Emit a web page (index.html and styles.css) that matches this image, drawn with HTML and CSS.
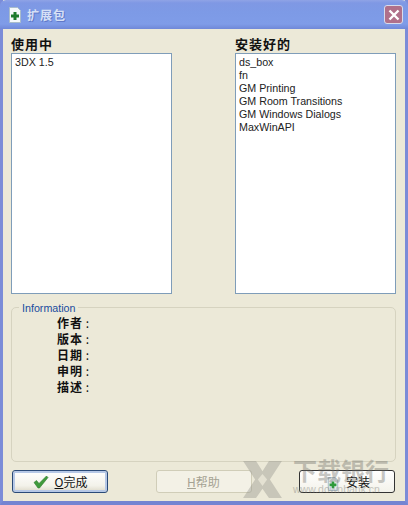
FILE: index.html
```html
<!DOCTYPE html>
<html lang="zh-CN">
<head>
    <meta charset="UTF-8">
    <meta name="viewport" content="width=device-width, initial-scale=1.0">
    <title>扩展包</title>
    <link rel="stylesheet" href="styles.css">
</head>
<body>
    <div class="window">
        <div class="titlebar">
            <svg class="title-icon" width="14" height="16" viewBox="0 0 14 16">
                <path d="M1.5 .5H9.500L12.500 3.500V15.500H1.500Z" fill="#f4f8fb" stroke="#a9bccb"/>
                <path d="M5.500 5H8.500V7.500H11V10.500H8.500V13H5.500V10.500H3V7.500H5.500Z" fill="#1c7a2e"/>
            </svg>
            <span class="title-text">扩展包</span>
            <div class="close-btn">
                <svg width="12" height="12" viewBox="0 0 12 12">
                    <path d="M1.500 1.500L10.500 10.500M10.500 1.500L1.500 10.500" stroke="#fff" stroke-width="2.400"/>
                </svg>
            </div>
        </div>

        <div class="content">
            <div class="lists">
                <div class="list-col">
                    <div class="list-label">使用中</div>
                    <div class="listbox">
                        <div>3DX 1.5</div>
                    </div>
                </div>
                <div class="list-col">
                    <div class="list-label">安装好的</div>
                    <div class="listbox">
                        <div>ds_box</div>
                        <div>fn</div>
                        <div>GM Printing</div>
                        <div>GM Room Transitions</div>
                        <div>GM Windows Dialogs</div>
                        <div>MaxWinAPI</div>
                    </div>
                </div>
            </div>

            <div class="groupbox">
                <div class="group-title">Information</div>
                <div class="info-row"><b>作者</b> :</div>
                <div class="info-row"><b>版本</b> :</div>
                <div class="info-row"><b>日期</b> :</div>
                <div class="info-row"><b>申明</b> :</div>
                <div class="info-row"><b>描述</b> :</div>
            </div>

            <div class="buttons">
                <div class="btn btn-default">
                    <svg width="16" height="14" viewBox="0 0 16 14">
                        <path d="M1 7.500L3.500 5.500L6 8.500L13.500 1L15 2.500L6.500 13H5Z" fill="#3f9a3c" stroke="#2b7a2c" stroke-width=".6"/>
                    </svg>
                    <span><u>O</u>完成</span>
                </div>
                <div class="btn btn-disabled"><span><u>H</u>帮助</span></div>
                <div class="btn btn-dark">
                    <svg class="install-icon" width="12" height="14" viewBox="0 0 14 16">
                        <path d="M1.500 .5H9.500L12.500 3.500V15.500H1.500Z" fill="#e6eef2" stroke="#9fb2c0"/>
                        <path d="M5.500 5H8.500V7.500H11V10.500H8.500V13H5.500V10.500H3V7.500H5.500Z" fill="#2f9a3a"/>
                    </svg>
                    <span>安装</span>
                </div>
            </div>
        </div>

        <!-- watermark over the bottom right corner -->
        <div class="watermark">
            <svg class="wm-logo" width="39" height="37" viewBox="0 0 42 40">
                <path d="M0 0H14L21 11L28 0H42L29 20L42 40H28L21 30L14 40H0L13 20Z" fill="#8f8f88"/>
                <path d="M21 14L26 20L21 27L16 20Z" fill="#d8d6ca"/>
            </svg>
            <div class="wm-text">
                <div class="wm-name">下载银行</div>
                <div class="wm-url">www.downbank.cn</div>
            </div>
        </div>
    </div>
</body>
</html>
```

FILE: styles.css
```css
html, body {
    margin: 0;
    padding: 0;
}
body {
    width: 408px;
    height: 505px;
    overflow: hidden;
    font-family: "Liberation Sans", "Noto Sans CJK SC", sans-serif;
    font-size: 12px;
    color: #111;
}
.window {
    position: relative;
    box-sizing: border-box;
    width: 408px;
    height: 505px;
    display: flex;
    flex-direction: column;
    background-color: #ece9d8;
    border-left: 3px solid #7b8cd8;
    border-right: 3px solid #7b8cd8;
    border-bottom: 4px solid #7484d2;
}
.titlebar {
    display: flex;
    align-items: center;
    height: 29px;
    margin: 0 -3px;
    padding: 0 5px 0 8px;
    box-sizing: border-box;
    border-radius: 6px 6px 0 0;
    background: linear-gradient(to bottom, #8fa3e6 0, #7f98e4 3px, #7d9ae6 12px, #7f9ce8 24px, #7088d8 29px);
}
.title-icon {
    margin-right: 5px;
}
.title-text {
    font-family: "Noto Sans CJK SC", sans-serif;
    font-size: 12px;
    font-weight: bold;
    letter-spacing: 1px;
    color: #d6e0f6;
    text-shadow: 1px 1px 0 #6078c8;
}
.close-btn {
    display: flex;
    align-items: center;
    justify-content: center;
    width: 19px;
    height: 19px;
    margin-left: auto;
    box-sizing: border-box;
    border: 1px solid #d8dcec;
    border-radius: 3px;
    background-color: #b0708a;
}
.content {
    flex: 1;
    display: flex;
    flex-direction: column;
    padding: 6px 9px 0 8px;
}
.lists {
    display: flex;
    justify-content: space-between;
}
.list-col {
    width: 161px;
}
.list-label {
    height: 18px;
    line-height: 17px;
    font-family: "Noto Sans CJK SC", sans-serif;
    font-size: 13px;
    font-weight: bold;
    letter-spacing: 1px;
}
.listbox {
    box-sizing: border-box;
    height: 241px;
    padding: 2px 3px;
    background-color: #fff;
    border: 1px solid #7f9db9;
    line-height: 13px;
    font-size: 10.700px;
    color: #222;
}
.groupbox {
    position: relative;
    box-sizing: border-box;
    height: 155px;
    margin-top: 13px;
    padding: 7px 0 0 45px;
    border: 1px solid #d6d3c0;
    border-radius: 5px;
}
.group-title {
    position: absolute;
    top: -7px;
    left: 7px;
    padding: 0 3px 0 3px;
    background-color: #ece9d8;
    font-size: 10.700px;
    line-height: 14px;
    color: #1a4c9e;
}
.info-row {
    height: 16px;
    line-height: 16px;
    font-family: "Noto Sans CJK SC", sans-serif;
    font-size: 12px;
}
.info-row b {
    letter-spacing: 1px;
}
.buttons {
    display: flex;
    justify-content: space-between;
    margin-top: 8px;
    padding: 0 1px;
}
.btn {
    display: flex;
    align-items: center;
    justify-content: center;
    gap: 6px;
    box-sizing: border-box;
    width: 96px;
    height: 23px;
    border: 1px solid #003c74;
    border-radius: 3px;
    background: linear-gradient(to bottom, #fff, #f3f2ea 70%, #dcd8c8);
    font-family: "Noto Sans CJK SC", sans-serif;
    font-size: 12px;
}
.btn-default {
    border-color: #2a4a78;
    box-shadow: inset 0 0 0 2px #b6c8e6;
}
.btn-disabled {
    border-color: #d0cdb8;
    background: #f3f1e6;
    color: #a5a293;
}
.btn-dark {
    padding-left: 3px;
    gap: 7px;
    border-color: #333;
    background: linear-gradient(to bottom, #fff, #f3f2ea);
}
.install-icon {
    margin-top: 4px;
}
.watermark {
    position: absolute;
    right: 16px;
    bottom: 3px;
    display: flex;
    align-items: flex-start;
    gap: 11px;
    opacity: 0.38;
    pointer-events: none;
}
.wm-logo {
    margin-top: 3px;
}
.wm-name {
    font-family: "Noto Sans CJK SC", sans-serif;
    font-size: 24px;
    font-weight: bold;
    line-height: 24px;
    color: #6f6f68;
}
.wm-url {
    margin-top: 1px;
    font-size: 10.500px;
    line-height: 12px;
    color: #6f6f68;
}
```
